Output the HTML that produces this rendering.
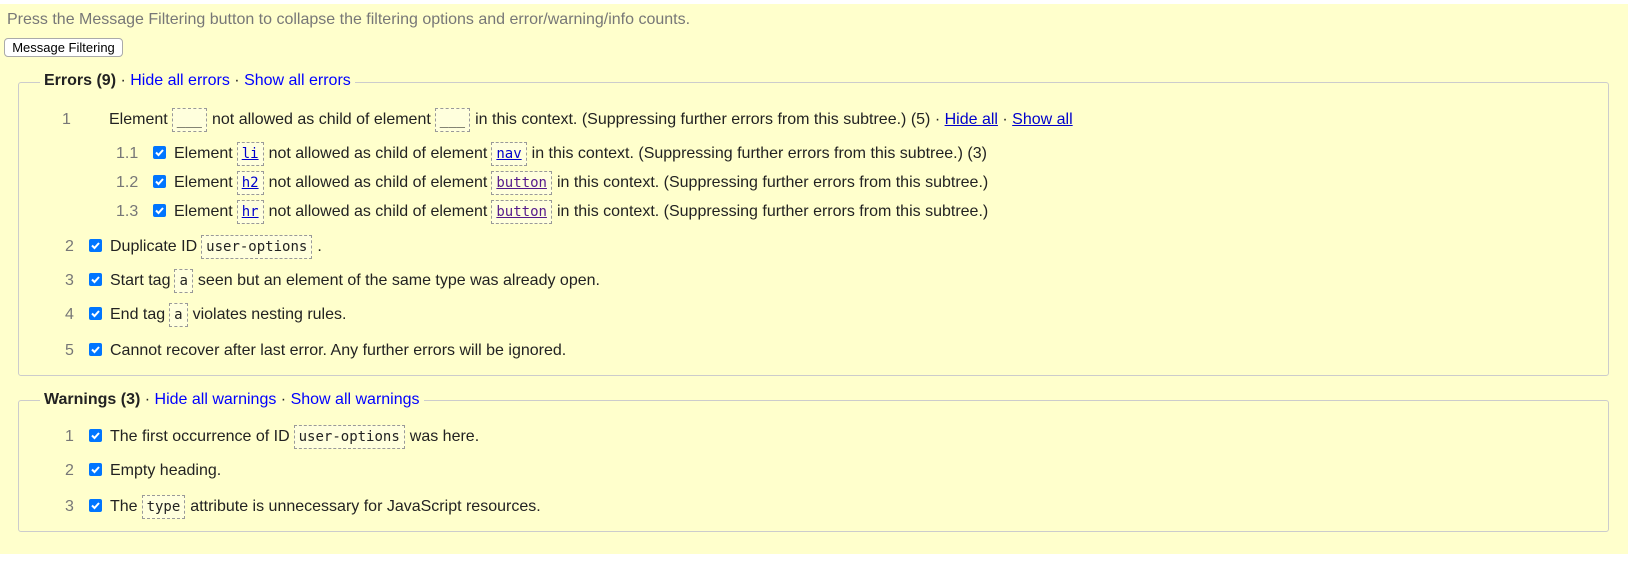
<!DOCTYPE html>
<html><head><meta charset="utf-8"><style>
html,body{margin:0;padding:0;background:#fff;width:1638px;height:565px;overflow:hidden}
body{font-family:"Liberation Sans",Arial,sans-serif;font-size:16px;color:#222}
#bg{position:absolute;left:0;top:4px;width:1628px;height:550px;background:#ffffcc}
.a{position:absolute;white-space:nowrap;line-height:20px}
.intro{left:7px;top:10px;color:#777}
.btn{position:absolute;left:4px;top:38px;height:17px;width:117px;border:1px solid #aaa;border-radius:4px;background:#fff;font-size:13px;line-height:17px;text-align:center;color:#000}
.fs{position:absolute;left:18px;width:1589px;border:1px solid #ccc;border-radius:3px}
.leg{position:absolute;left:40px;padding:0 4px;background:#ffffcc;line-height:20px}
.leg b{font-weight:bold;color:#222}
.leg a{color:#00f;text-decoration:none}
.num{position:absolute;color:#777;line-height:20px}
.cb{position:absolute;width:13px;height:13px;background:#0075ff;border-radius:2px}
.cb svg{position:absolute;left:0;top:0}
code{font-family:"DejaVu Sans Mono","Liberation Mono",monospace;font-size:14px;border:1px dashed #999;padding:3px 4px;margin:0 5px 0 4px;background:#ffffdd}
code u{color:#00c}
code u.v{color:#551a8b}
.lnk{color:#00c;text-decoration:underline}
</style></head><body>
<div id="bg"></div>
<div class="a intro">Press the Message Filtering button to collapse the filtering options and error/warning/info counts.</div>
<div class="btn">Message Filtering</div>

<div class="fs" style="top:82px;height:292px"></div>
<div class="leg" style="top:71px"><b>Errors (9)</b> · <a>Hide all errors</a> · <a>Show all errors</a></div>

<div class="fs" style="top:400px;height:130px"></div>
<div class="leg" style="top:390px"><b>Warnings (3)</b> · <a>Hide all warnings</a> · <a>Show all warnings</a></div>

<div class="num" style="left:62px;top:110px">1</div>
<div class="a" style="left:109px;top:110px">Element<code>___</code>not allowed as child of element<code>___</code>in this context. (Suppressing further errors from this subtree.) (5) · <span class="lnk">Hide all</span> · <span class="lnk">Show all</span></div>

<div class="num" style="left:116px;top:144px">1.1</div>
<div class="cb" style="left:153px;top:146px"><svg width="13" height="13"><path d="M3 6.5l2.5 2.5 4.5-5" stroke="#fff" stroke-width="2" fill="none"/></svg></div>
<div class="a" style="left:174px;top:144px">Element<code><u>li</u></code>not allowed as child of element<code><u>nav</u></code>in this context. (Suppressing further errors from this subtree.) (3)</div>

<div class="num" style="left:116px;top:173px">1.2</div>
<div class="cb" style="left:153px;top:175px"><svg width="13" height="13"><path d="M3 6.5l2.5 2.5 4.5-5" stroke="#fff" stroke-width="2" fill="none"/></svg></div>
<div class="a" style="left:174px;top:173px">Element<code><u>h2</u></code>not allowed as child of element<code><u class="v">button</u></code>in this context. (Suppressing further errors from this subtree.)</div>

<div class="num" style="left:116px;top:202px">1.3</div>
<div class="cb" style="left:153px;top:204px"><svg width="13" height="13"><path d="M3 6.5l2.5 2.5 4.5-5" stroke="#fff" stroke-width="2" fill="none"/></svg></div>
<div class="a" style="left:174px;top:202px">Element<code><u>hr</u></code>not allowed as child of element<code><u class="v">button</u></code>in this context. (Suppressing further errors from this subtree.)</div>

<div class="num" style="left:65px;top:237px">2</div>
<div class="cb" style="left:89px;top:239px"><svg width="13" height="13"><path d="M3 6.5l2.5 2.5 4.5-5" stroke="#fff" stroke-width="2" fill="none"/></svg></div>
<div class="a" style="left:110px;top:237px">Duplicate ID<code>user-options</code>.</div>

<div class="num" style="left:65px;top:271px">3</div>
<div class="cb" style="left:89px;top:273px"><svg width="13" height="13"><path d="M3 6.5l2.5 2.5 4.5-5" stroke="#fff" stroke-width="2" fill="none"/></svg></div>
<div class="a" style="left:110px;top:271px">Start tag<code>a</code>seen but an element of the same type was already open.</div>

<div class="num" style="left:65px;top:305px">4</div>
<div class="cb" style="left:89px;top:307px"><svg width="13" height="13"><path d="M3 6.5l2.5 2.5 4.5-5" stroke="#fff" stroke-width="2" fill="none"/></svg></div>
<div class="a" style="left:110px;top:305px">End tag<code>a</code>violates nesting rules.</div>

<div class="num" style="left:65px;top:341px">5</div>
<div class="cb" style="left:89px;top:343px"><svg width="13" height="13"><path d="M3 6.5l2.5 2.5 4.5-5" stroke="#fff" stroke-width="2" fill="none"/></svg></div>
<div class="a" style="left:110px;top:341px">Cannot recover after last error. Any further errors will be ignored.</div>

<div class="num" style="left:65px;top:427px">1</div>
<div class="cb" style="left:89px;top:429px"><svg width="13" height="13"><path d="M3 6.5l2.5 2.5 4.5-5" stroke="#fff" stroke-width="2" fill="none"/></svg></div>
<div class="a" style="left:110px;top:427px">The first occurrence of ID<code>user-options</code>was here.</div>

<div class="num" style="left:65px;top:461px">2</div>
<div class="cb" style="left:89px;top:463px"><svg width="13" height="13"><path d="M3 6.5l2.5 2.5 4.5-5" stroke="#fff" stroke-width="2" fill="none"/></svg></div>
<div class="a" style="left:110px;top:461px">Empty heading.</div>

<div class="num" style="left:65px;top:497px">3</div>
<div class="cb" style="left:89px;top:499px"><svg width="13" height="13"><path d="M3 6.5l2.5 2.5 4.5-5" stroke="#fff" stroke-width="2" fill="none"/></svg></div>
<div class="a" style="left:110px;top:497px">The<code>type</code>attribute is unnecessary for JavaScript resources.</div>
</body></html>
